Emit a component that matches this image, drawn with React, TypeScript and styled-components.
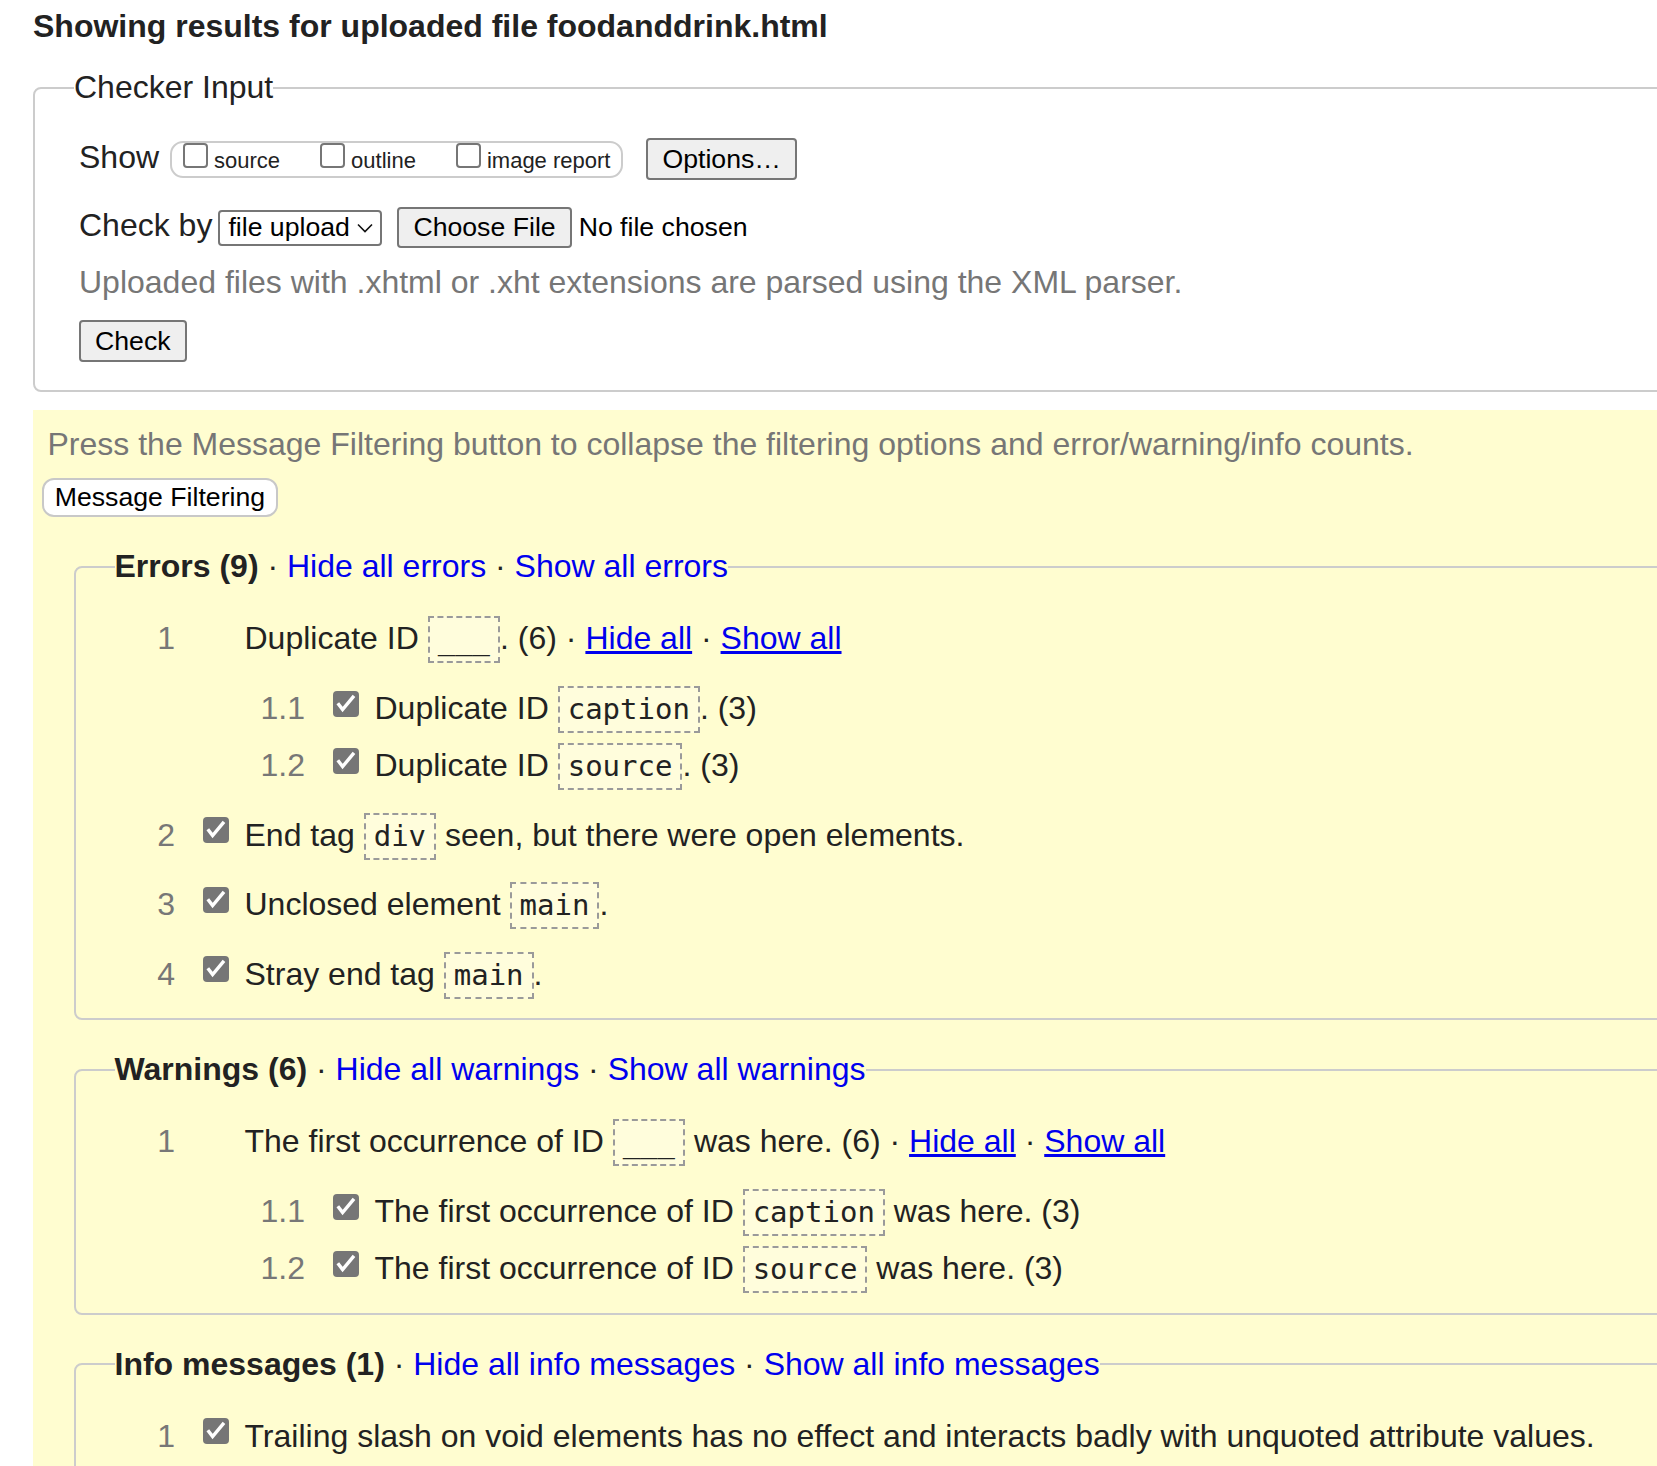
import React from "react";
import styled, { createGlobalStyle } from "styled-components";

const GlobalStyle = createGlobalStyle`
  html, body { margin: 0; padding: 0; overflow: hidden; background: #ffffff; }
  body { font-family: "Liberation Sans", Arial, sans-serif; color: #222222; }
  * { box-sizing: border-box; }
`;

const Page = styled.div`
  width: 1900px;
  padding: 8px 0 40px 33px;
`;

const Title = styled.h2`
  margin: 0;
  font-size: 32px;
  font-weight: bold;
  line-height: normal;
  color: #222222;
`;

const Panel = styled.fieldset`
  margin: 24px 0 0;
  padding: 0;
  border: 2px solid #cccccc;
  border-radius: 8px;
  min-inline-size: 0;
`;

const PanelLegend = styled.legend`
  margin-left: 39px;
  padding: 0;
  font-size: 32px;
  line-height: normal;
  color: #222222;
`;

const PanelBody = styled.div`
  padding: 32px 0 28px 44px;
`;

const FormRow = styled.div<{ $gap: number }>`
  display: flex;
  align-items: baseline;
  margin-top: ${(p) => p.$gap}px;
`;

const FieldLabel = styled.span`
  font-size: 32px;
  line-height: normal;
  color: #222222;
`;

const ShowGroup = styled.span`
  display: inline-flex;
  align-items: baseline;
  gap: 40px;
  height: 37px;
  margin-left: 11px;
  padding: 0 11px;
  border: 2px solid #cccccc;
  border-radius: 13px;
`;

const Option = styled.label`
  display: inline-flex;
  align-items: baseline;
  gap: 6px;
  font-size: 22px;
  line-height: normal;
  color: #222222;
`;

const EmptyBox = styled.span`
  display: block;
  width: 25px;
  height: 25px;
  border: 2px solid #767676;
  border-radius: 4px;
  background: #ffffff;
`;

const FormButton = styled.button<{ $h: number; $ml?: number }>`
  height: ${(p) => p.$h}px;
  margin-left: ${(p) => p.$ml ?? 0}px;
  padding: 0 14px;
  font-family: "Liberation Sans", Arial, sans-serif;
  font-size: 26.67px;
  line-height: normal;
  color: #000000;
  background: #efefef;
  border: 2px solid #767676;
  border-radius: 4px;
`;

const SelectBox = styled.span`
  display: inline-flex;
  align-items: center;
  width: 164px;
  height: 36px;
  margin-left: 6px;
  padding: 0 7px 0 8px;
  border: 2px solid #767676;
  border-radius: 4px;
  background: #ffffff;
  font-size: 26.67px;
  line-height: normal;
  color: #000000;

  svg {
    margin-left: auto;
  }
`;

const FileName = styled.span`
  margin-left: 7px;
  font-size: 26.67px;
  line-height: normal;
  color: #000000;
`;

const Hint = styled.p`
  margin: 16px 0 0;
  font-size: 32px;
  line-height: normal;
  color: #767676;
`;

const Results = styled.div`
  margin-top: 18px;
  padding: 15.5px 0 60px 9px;
  background: #fffdd0;
`;

const Note = styled.p`
  margin: 0 0 0 5.5px;
  font-size: 32px;
  line-height: normal;
  color: #767676;
`;

const FilterButton = styled.button`
  display: block;
  height: 39px;
  margin-top: 15.5px;
  padding: 0 10.75px;
  font-family: "Liberation Sans", Arial, sans-serif;
  font-size: 26.67px;
  line-height: normal;
  color: #000000;
  background: #ffffff;
  border: 2px solid #c8c8c8;
  border-radius: 12px;
`;

const MsgSet = styled.fieldset`
  margin: 31px 0 0 32px;
  padding: 0;
  border: 2px solid #cccccc;
  border-radius: 8px;
  min-inline-size: 0;
`;

const MsgLegend = styled.legend`
  margin-left: 38.5px;
  padding: 0;
  font-size: 32px;
  line-height: normal;
  color: #222222;

  strong {
    font-weight: bold;
  }
`;

const LegendLink = styled.a`
  color: #0000ee;
  text-decoration: none;
`;

const MsgBody = styled.ol`
  margin: 0;
  padding: 30px 0 19.5px 40px;
`;

const Item = styled.li`
  list-style: none;
  & + & {
    margin-top: 21.5px;
  }
`;

const SubList = styled.ol`
  margin: 22px 0 0;
  padding: 0 0 0 130px;
`;

const SubItem = styled.li`
  list-style: none;
  & + & {
    margin-top: 9px;
  }
`;

const MsgRow = styled.div`
  display: flex;
  align-items: baseline;
`;

const Num = styled.span`
  flex: none;
  width: 59px;
  text-align: right;
  font-size: 32px;
  line-height: normal;
  color: #777777;
`;

const Tick = styled.span<{ $empty?: boolean }>`
  flex: none;
  align-self: flex-start;
  display: block;
  width: 26px;
  height: 26px;
  margin: 5.6px 15.5px 0 28px;
  border-radius: 4px;
  background: ${(p) => (p.$empty ? "transparent" : "#767676")};

  svg {
    display: block;
  }
`;

const Msg = styled.span`
  font-size: 32px;
  line-height: 47px;
  color: #222222;
  white-space: nowrap;
`;

const Code = styled.code`
  display: inline-block;
  height: 47px;
  padding: 0 8px;
  border: 2px dashed #9a9a9a;
  background: rgba(255, 255, 255, 0.25);
  font-family: "DejaVu Sans Mono", "Liberation Mono", monospace;
  font-size: 29px;
  line-height: 43px;
  color: #222222;
  vertical-align: baseline;
`;

const RowLink = styled.a`
  color: #0000ee;
  text-decoration: underline;
`;

function CheckMark() {
  return (
    <svg width="26" height="26" viewBox="0 0 26 26">
      <path d="M4.8 12.2 L9.6 18.6 L21 4.8" fill="none" stroke="#ffffff" strokeWidth="3.4" />
    </svg>
  );
}

function Chevron() {
  return (
    <svg width="16" height="10" viewBox="0 0 16 10">
      <polyline points="1,1.5 8,8.5 15,1.5" fill="none" stroke="#111111" strokeWidth="1.6" />
    </svg>
  );
}

type RowProps = { n: string; checked?: boolean; children: React.ReactNode };

function Row({ n, checked = true, children }: RowProps) {
  return (
    <MsgRow>
      <Num>{n}</Num>
      <Tick $empty={!checked}>{checked && <CheckMark />}</Tick>
      <Msg>{children}</Msg>
    </MsgRow>
  );
}

function ShowAll() {
  return (
    <>
      {" · "}
      <RowLink href="#">Hide all</RowLink>
      {" · "}
      <RowLink href="#">Show all</RowLink>
    </>
  );
}

export default function App() {
  return (
    <Page>
      <GlobalStyle />
      <Title>Showing results for uploaded file foodanddrink.html</Title>

      <Panel>
        <PanelLegend>Checker Input</PanelLegend>
        <PanelBody>
          <FormRow $gap={0}>
            <FieldLabel>Show</FieldLabel>
            <ShowGroup>
              <Option>
                <EmptyBox />
                source
              </Option>
              <Option>
                <EmptyBox />
                outline
              </Option>
              <Option>
                <EmptyBox />
                image report
              </Option>
            </ShowGroup>
            <FormButton $h={42} $ml={23}>Options…</FormButton>
          </FormRow>
          <FormRow $gap={27}>
            <FieldLabel>Check by</FieldLabel>
            <SelectBox>
              file upload
              <Chevron />
            </SelectBox>
            <FormButton $h={41} $ml={15}>Choose File</FormButton>
            <FileName>No file chosen</FileName>
          </FormRow>
          <Hint>Uploaded files with .xhtml or .xht extensions are parsed using the XML parser.</Hint>
          <FormRow $gap={19}>
            <FormButton $h={42}>Check</FormButton>
          </FormRow>
        </PanelBody>
      </Panel>

      <Results>
        <Note>Press the Message Filtering button to collapse the filtering options and error/warning/info counts.</Note>
        <FilterButton>Message Filtering</FilterButton>

        <MsgSet>
          <MsgLegend>
            <strong>Errors (9)</strong>
            {" · "}
            <LegendLink href="#">Hide all errors</LegendLink>
            {" · "}
            <LegendLink href="#">Show all errors</LegendLink>
          </MsgLegend>
          <MsgBody>
            <Item>
              <Row n="1" checked={false}>
                Duplicate ID <Code>___</Code>. (6)
                <ShowAll />
              </Row>
              <SubList>
                <SubItem>
                  <Row n="1.1">
                    Duplicate ID <Code>caption</Code>. (3)
                  </Row>
                </SubItem>
                <SubItem>
                  <Row n="1.2">
                    Duplicate ID <Code>source</Code>. (3)
                  </Row>
                </SubItem>
              </SubList>
            </Item>
            <Item>
              <Row n="2">
                End tag <Code>div</Code> seen, but there were open elements.
              </Row>
            </Item>
            <Item>
              <Row n="3">
                Unclosed element <Code>main</Code>.
              </Row>
            </Item>
            <Item>
              <Row n="4">
                Stray end tag <Code>main</Code>.
              </Row>
            </Item>
          </MsgBody>
        </MsgSet>

        <MsgSet>
          <MsgLegend>
            <strong>Warnings (6)</strong>
            {" · "}
            <LegendLink href="#">Hide all warnings</LegendLink>
            {" · "}
            <LegendLink href="#">Show all warnings</LegendLink>
          </MsgLegend>
          <MsgBody>
            <Item>
              <Row n="1" checked={false}>
                The first occurrence of ID <Code>___</Code> was here. (6)
                <ShowAll />
              </Row>
              <SubList>
                <SubItem>
                  <Row n="1.1">
                    The first occurrence of ID <Code>caption</Code> was here. (3)
                  </Row>
                </SubItem>
                <SubItem>
                  <Row n="1.2">
                    The first occurrence of ID <Code>source</Code> was here. (3)
                  </Row>
                </SubItem>
              </SubList>
            </Item>
          </MsgBody>
        </MsgSet>

        <MsgSet>
          <MsgLegend>
            <strong>Info messages (1)</strong>
            {" · "}
            <LegendLink href="#">Hide all info messages</LegendLink>
            {" · "}
            <LegendLink href="#">Show all info messages</LegendLink>
          </MsgLegend>
          <MsgBody>
            <Item>
              <Row n="1">Trailing slash on void elements has no effect and interacts badly with unquoted attribute values.</Row>
            </Item>
          </MsgBody>
        </MsgSet>
      </Results>
    </Page>
  );
}
